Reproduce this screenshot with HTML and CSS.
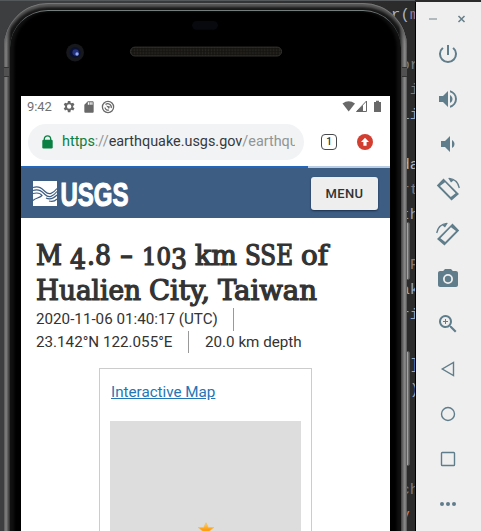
FILE: index.html
```html
<!DOCTYPE html>
<html lang="en">
<head>
<meta charset="utf-8">
<title>M 4.8 - 103 km SSE of Hualien City, Taiwan</title>
<link rel="stylesheet" href="styles.css">
</head>
<body>
<div class="desktop">
  <main class="stage">
    <pre class="code">r(<b class="purple">m</b>

<span class="dim">or</span>
<span class="dim">i</span>
<b class="blue">li</b>

da
<span class="dim">rt</span>
<b class="blue">th</b>

<span class="tan">F</span>
<b class="blue">ak</b>
<b class="blue">ri</b>

<b class="blue">]</b>
<b class="blue">)</b>



<span class="dim">ch</span>
<b class="orange">v </b></pre>
    <i class="side-key key-power"></i><i class="side-key key-volume"></i>
    <div class="phone">
      <div class="bezel">
        <svg class="hardware" width="369" height="83" viewBox="21 13 369 83">
          <defs><pattern id="mesh" width="3" height="3" patternUnits="userSpaceOnUse"><rect width="3" height="3" fill="#171512"/><circle cx="1.5" cy="1.5" r=".8" fill="#302d27"/></pattern></defs>
          <rect x="192" y="20" width="26" height="9" rx="4.5" fill="#07090e"/>
          <circle cx="73.500" cy="52" r="9" fill="#17181c"/><circle cx="73.500" cy="52" r="5.5" fill="#0a1030"/>
          <circle cx="74" cy="52" r="3.2" fill="#24327b"/><circle cx="75.500" cy="53.5" r="1.7" fill="#91a7f3"/>
          <rect x="129.5" y="46.5" width="153" height="9" rx="4.5" fill="url(#mesh)" stroke="#34322e"/>
        </svg>
        <div class="screen">
          <div class="status">
            <span class="clock">9:42</span>
            <svg class="gear" width="15" height="15" viewBox="0 0 24 24"><path d="M19.4 13c.1-.6.1-1.4 0-2l2.1-1.7-2-3.5-2.5 1a8 8 0 0 0-1.7-1L15 3h-4l-.4 2.800a8 8 0 0 0-1.700 1l-2.500-1-2 3.500L6.600 11a8 8 0 0 0 0 2l-2.200 1.700 2 3.500 2.500-1a8 8 0 0 0 1.700 1L11 21h4l.4-2.800a8 8 0 0 0 1.700-1l2.500 1 2-3.500zM13 15.500a3.500 3.500 0 1 1 0-7 3.500 3.500 0 0 1 0 7z"/></svg>
            <svg class="sd" width="14" height="14" viewBox="0 0 24 24"><path d="M18 2h-8L4 8v12c0 1.100.9 2 2 2h12c1.100 0 2-.9 2-2V4c0-1.100-.9-2-2-2zm-6 6h-2V4h2v4zm3 0h-2V4h2v4zm3 0h-2V4h2v4z"/></svg>
            <svg class="target" width="14" height="14" viewBox="0 0 14 14"><circle cx="7" cy="7" r="5.600" fill="none" stroke="#686868" stroke-width="1.300"/><path d="M4 7.500A3 3 0 0 0 8 10M4.500 4.600A3.500 3.500 0 0 1 10.200 8" fill="none" stroke="#686868" stroke-width="1.300"/><path d="M5 5.500l4 1-1 2.500z"/></svg>
            <span class="grow"></span>
            <svg width="41" height="13" viewBox="0 0 41 13"><path d="M.5 3.500Q6.500-.8 13 3.500L6.700 11.500z"/><path d="M24.500 1v10.500h-10z" fill="none" stroke="#686868"/><path d="M21 5v6.500h-6.500z"/><path d="M32 2h2V.8h3V2h2v10h-7z"/></svg>
          </div>
          <div class="browser">
            <div class="url"><svg width="11" height="14" viewBox="0 0 11 14"><path d="M2.300 5V4a3.200 3.200 0 0 1 6.400 0v1" fill="none" stroke="#0b8043" stroke-width="1.300"/><rect x=".3" y="4.800" width="10.400" height="8.600" rx="1.200" fill="#0b8043"/></svg>
              <div class="address"><span class="scheme">https</span><span class="soft">://</span>earthquake.usgs.gov<span class="soft">/earthqu</span></div></div>
            <div class="tabs">1</div>
            <svg class="update" width="16" height="16" viewBox="0 0 16 16"><circle cx="8" cy="8" r="8" fill="#d23f31"/><path d="M8 3.800 12 8H9.600v3.700H6.400V8H4z" fill="#fff"/></svg>
          </div>
          <div class="progress"><i></i></div>
          <header class="site">
            <svg width="99" height="32" viewBox="32 176 99 32">
              <path d="M33 180h24v25H33z" fill="#fff"/>
              <g fill="none" stroke="#3d5d83" stroke-width="1.200"><path d="M33 186.500c6-2 9 1 12 4 4 4 8 2 12-3M33 189.500c6-2 9 1 12 4 4 4 8 2 12-3M46 197c4 2 8 0 11-3M49 200c3 1 6 0 8-2M33 192.500c4-1 7-1 9 2-3 3-6 2-9 5"/></g>
              <text class="wordmark" x="60.500" y="205" textLength="68" lengthAdjust="spacingAndGlyphs">USGS</text>
            </svg>
            <button class="menu">MENU</button>
          </header>
          <article class="event">
            <h1><svg width="300" height="72" viewBox="36 236 300 72"><g class="title"><text x="36" y="265" textLength="26" lengthAdjust="spacingAndGlyphs">M</text><text x="70" y="268.500" textLength="16" lengthAdjust="spacingAndGlyphs">4</text><text x="87" y="265" textLength="24" lengthAdjust="spacingAndGlyphs">.8</text><text x="120" y="264" textLength="13" lengthAdjust="spacingAndGlyphs">-</text><text class="old" x="142" y="265" textLength="29" lengthAdjust="spacingAndGlyphs">10</text><text x="171" y="268.500" textLength="16" lengthAdjust="spacingAndGlyphs">3</text><text x="195" y="265" textLength="42" lengthAdjust="spacingAndGlyphs">km</text><text x="245" y="265" textLength="48" lengthAdjust="spacingAndGlyphs">SSE</text><text x="301" y="265" textLength="27" lengthAdjust="spacingAndGlyphs">of</text><text x="36" y="299.500" textLength="105" lengthAdjust="spacingAndGlyphs">Hualien</text><text x="149" y="299.500" textLength="61" lengthAdjust="spacingAndGlyphs">City,</text><text x="218" y="299.500" textLength="99" lengthAdjust="spacingAndGlyphs">Taiwan</text></g></svg></h1>
            <ul class="facts"><li class="time">2020-11-06 01:40:17 (UTC)</li><li class="place">23.142°N 122.055°E</li><li class="depth">20.0 km depth</li></ul>
            <section class="card"><a>Interactive Map</a><div class="map"><svg width="18" height="16" viewBox="0 0 18 16"><defs><linearGradient id="gold" x2="0" y2="1"><stop stop-color="#ffd66a"/><stop offset=".5" stop-color="#ff9e12"/></linearGradient></defs><path d="M9 .8 11.300 5.500h5.500L12.500 9l1.500 5L9 11l-5 3 1.500-5L1.200 5.500h5.500z" fill="url(#gold)" stroke="#f2bd58" stroke-width=".7"/></svg></div></section>
          </article>
        </div>
      </div>
    </div>
  </main>
  <aside class="toolbar">
    <div class="window"><svg width="46" height="12" viewBox="0 0 46 12"><path d="M4 7h8" stroke="#98a3a8" stroke-width="1.400"/><path d="M33.500 4l6 6m0-6-6 6" stroke="#667e89" stroke-width="1.500"/></svg></div>
    <svg viewBox="0 0 24 24"><path d="M13 3h-2v10h2V3zm4.830 2.170-1.420 1.420A7 7 0 1 1 7.580 6.580L6.170 5.170a9 9 0 1 0 11.660 0z"/></svg>
    <svg viewBox="0 0 24 24"><path d="M3 9v6h4l5 5V4L7 9H3zm13.500 3c0-1.770-1.020-3.290-2.500-4.030v8.050c1.480-.73 2.500-2.250 2.500-4.020zM14 3.230v2.060a7 7 0 0 1 0 13.420v2.060a9 9 0 0 0 0-17.540z"/></svg>
    <svg viewBox="0 0 24 24"><path d="M18.500 12c0-1.770-1.020-3.290-2.500-4.030v8.050c1.480-.73 2.500-2.250 2.500-4.020zM5 9v6h4l5 5V4L9 9H5z"/></svg>
    <svg viewBox="0 0 24 24"><path fill-rule="evenodd" d="M7.500 1.500 23 17l-7.500 6.500L.8 8.500zM9 5.200 4 9l10.800 11 4.800-3.800z"/><path d="M13 1.300Q21.500 2 23.300 11" fill="none" stroke="#607d8b" stroke-width="1.300"/><path d="M12 .8l6 2.300-3 2.400z"/></svg>
    <svg viewBox="0 0 24 24"><g transform="matrix(-1 0 0 1 24 0)"><path fill-rule="evenodd" d="M7.500 1.500 23 17l-7.500 6.500L.8 8.500zM9 5.200 4 9l10.800 11 4.800-3.800z"/><path d="M13 1.300Q21.500 2 23.300 11" fill="none" stroke="#607d8b" stroke-width="1.300"/><path d="M12 .8l6 2.300-3 2.400z"/></g></svg>
    <svg viewBox="0 0 24 24"><circle cx="12" cy="12" r="3.200"/><path d="M9 2 7.170 4H4c-1.100 0-2 .9-2 2v12c0 1.100.9 2 2 2h16c1.100 0 2-.9 2-2V6c0-1.100-.9-2-2-2h-3.170L15 2H9zm3 15a5 5 0 1 1 0-10 5 5 0 0 1 0 10z"/></svg>
    <svg viewBox="0 0 24 24"><path d="M15.500 14h-.79l-.28-.27A6.500 6.500 0 1 0 13.730 14.430l.27.28v.79l5 4.990L20.490 19l-4.990-5zm-6 0a4.500 4.500 0 1 1 0-9 4.500 4.500 0 0 1 0 9zm2.500-4h-2v2H9v-2H7V9h2V7h1v2h2v1z"/></svg>
    <svg class="line" viewBox="0 0 24 24"><path d="M17.500 5.500v13L6.300 12z"/></svg>
    <svg class="line" viewBox="0 0 24 24"><circle cx="12" cy="12" r="6.500"/></svg>
    <svg class="line" viewBox="0 0 24 24"><rect x="5.500" y="5.500" width="13" height="13" rx=".8"/></svg>
    <svg viewBox="0 0 24 24"><circle cx="6" cy="12" r="2"/><circle cx="12" cy="12" r="2"/><circle cx="18" cy="12" r="2"/></svg>
  </aside>
</div>
</body>
</html>
```
FILE: styles.css
```css
* { box-sizing: border-box; }
body { margin: 0; width: 481px; height: 531px; overflow: hidden; background: #2b2b2b; font-family: Roboto, sans-serif; }
svg { display: block; flex-shrink: 0; }
.desktop { display: grid; grid-template-columns: 415px 66px; height: 531px; overflow: hidden; }
.stage { position: relative; height: 531px; overflow: hidden; padding: 2px 0 0 4px; background: linear-gradient(90deg, #3c3e40 0 80px, #2b2b2b 390px); border-top: 1px solid #55585a; }
.code { position: absolute; top: 2px; right: -4px; margin: 0; text-align: right; font: 15.500px/25px "Liberation Mono", monospace; color: #a9b7c6; }
.code b { font-weight: 400; }
.purple { color: #9876aa; }
.dim { color: #777b80; }
.blue { color: #91a7c4; }
.tan { color: #8a7763; }
.orange { color: #cc7832; }
.side-key { position: absolute; left: 405px; width: 5px; background: linear-gradient(90deg, #777, #aaa 60%, #444); border: 1px solid #555; border-radius: 2px; }
.key-power { top: 221px; height: 58px; }
.key-volume { top: 350px; height: 115px; }
.phone { position: relative; width: 403px; height: 600px; padding: 7px 6px 0; border-radius: 44px 44px 0 0; background: linear-gradient(90deg, #5c5c5c 0, #878787 2px, #555 4px, #151515 7px, #151515 395px, #555 398px, #929292 401px, #555 403px); box-shadow: inset 0 1px #777, inset 0 4px 3px #5c5c5c; }
.phone::before, .phone::after { content: ""; position: absolute; top: 64px; width: 5px; height: 8px; background: #515151; border-top: 1px solid #333; border-bottom: 1px solid #333; }
.phone::before { left: 0; }
.phone::after { right: 0; }
.bezel { height: 100%; padding: 3px 11px 0; background: #000; border-top: 1px solid #747c7c; border-radius: 38px 38px 0 0; box-shadow: inset 4px 0 3px #111, inset -4px 0 3px #111; }
.hardware { height: 82px; }
.screen { width: 369px; height: 500px; background: #fff; }
.status { display: flex; align-items: center; height: 21px; padding: 0 7px 0 6px; fill: #686868; }
.clock { width: 34px; font-size: 13px; color: #707070; letter-spacing: -.1px; }
.gear { margin-right: 6px; }
.sd { margin-right: 5px; }
.grow { flex: 1; }
.browser { display: flex; align-items: center; height: 49px; padding: 0 17px 0 7px; }
.url { display: flex; align-items: center; width: 276px; height: 36px; padding-left: 14px; border-radius: 18px; background: #f1f3f4; }
.address { width: 233px; margin-left: 9px; overflow: hidden; white-space: nowrap; font-size: 14.400px; line-height: 24px; color: #37393c; }
.scheme { color: #0b8043; }
.soft { color: #929496; }
.tabs { width: 16px; height: 16px; margin-left: 17px; border: 1.500px solid #46494c; border-radius: 4px; text-align: center; font-size: 10px; font-weight: 500; line-height: 14px; color: #333; }
.update { margin-left: 20px; }
.progress { height: 2px; background: #b9cce5; }
.progress i { display: block; width: 287px; height: 2px; background: #2367bd; }
.site { display: flex; align-items: center; justify-content: space-between; height: 50px; padding: 0 12px 0 11px; background: #3d5d83; }
.wordmark { font: 700 34px "Liberation Sans Narrow", "Liberation Sans", sans-serif; fill: #fff; stroke: #fff; stroke-width: 1.200px; }
.menu { width: 67px; height: 33px; padding: 0; border: 0; border-radius: 3px; background: #eee; font: 500 13px Roboto, sans-serif; letter-spacing: .4px; color: #333; box-shadow: 0 1px 2px #1a304c; }
.event { padding: 18px 15px 0; color: #333; }
h1 { margin: 0; height: 72px; }
.title { font: 400 28px "DejaVu Serif Condensed", "DejaVu Serif", serif; fill: #333; stroke: #333; stroke-width: 1.200px; }
.title .old { font-size: 24px; }
.facts { display: flex; flex-wrap: wrap; margin: 0; padding: 0; list-style: none; font-size: 15.200px; line-height: 22.500px; white-space: nowrap; }
.facts li { height: 22.500px; }
.time { width: 198px; margin-right: 100px; border-right: 1px solid #999; }
.place { width: 153px; border-right: 1px solid #999; }
.depth { padding-left: 16px; }
.card { width: 213px; height: 300px; margin: 15px 0 0 63px; padding: 12px 10px; border: 1px solid #ccc; }
.card a { display: block; padding-left: 1px; font-size: 15.200px; line-height: 22px; color: #2475b6; text-decoration: underline; }
.map { display: flex; justify-content: center; width: 191px; height: 230px; margin-top: 18px; padding-top: 101px; background: #ddd; }
.toolbar { display: flex; flex-direction: column; align-items: center; gap: 21px; margin-top: 2px; padding: 10px 1px 0 0; border-left: 1px solid #000; background: #efefef; fill: #607d8b; }
.toolbar > svg { width: 24px; height: 24px; }
.window { height: 9px; }
.line { fill: none; stroke: #607d8b; stroke-width: 1.400px; }
```
